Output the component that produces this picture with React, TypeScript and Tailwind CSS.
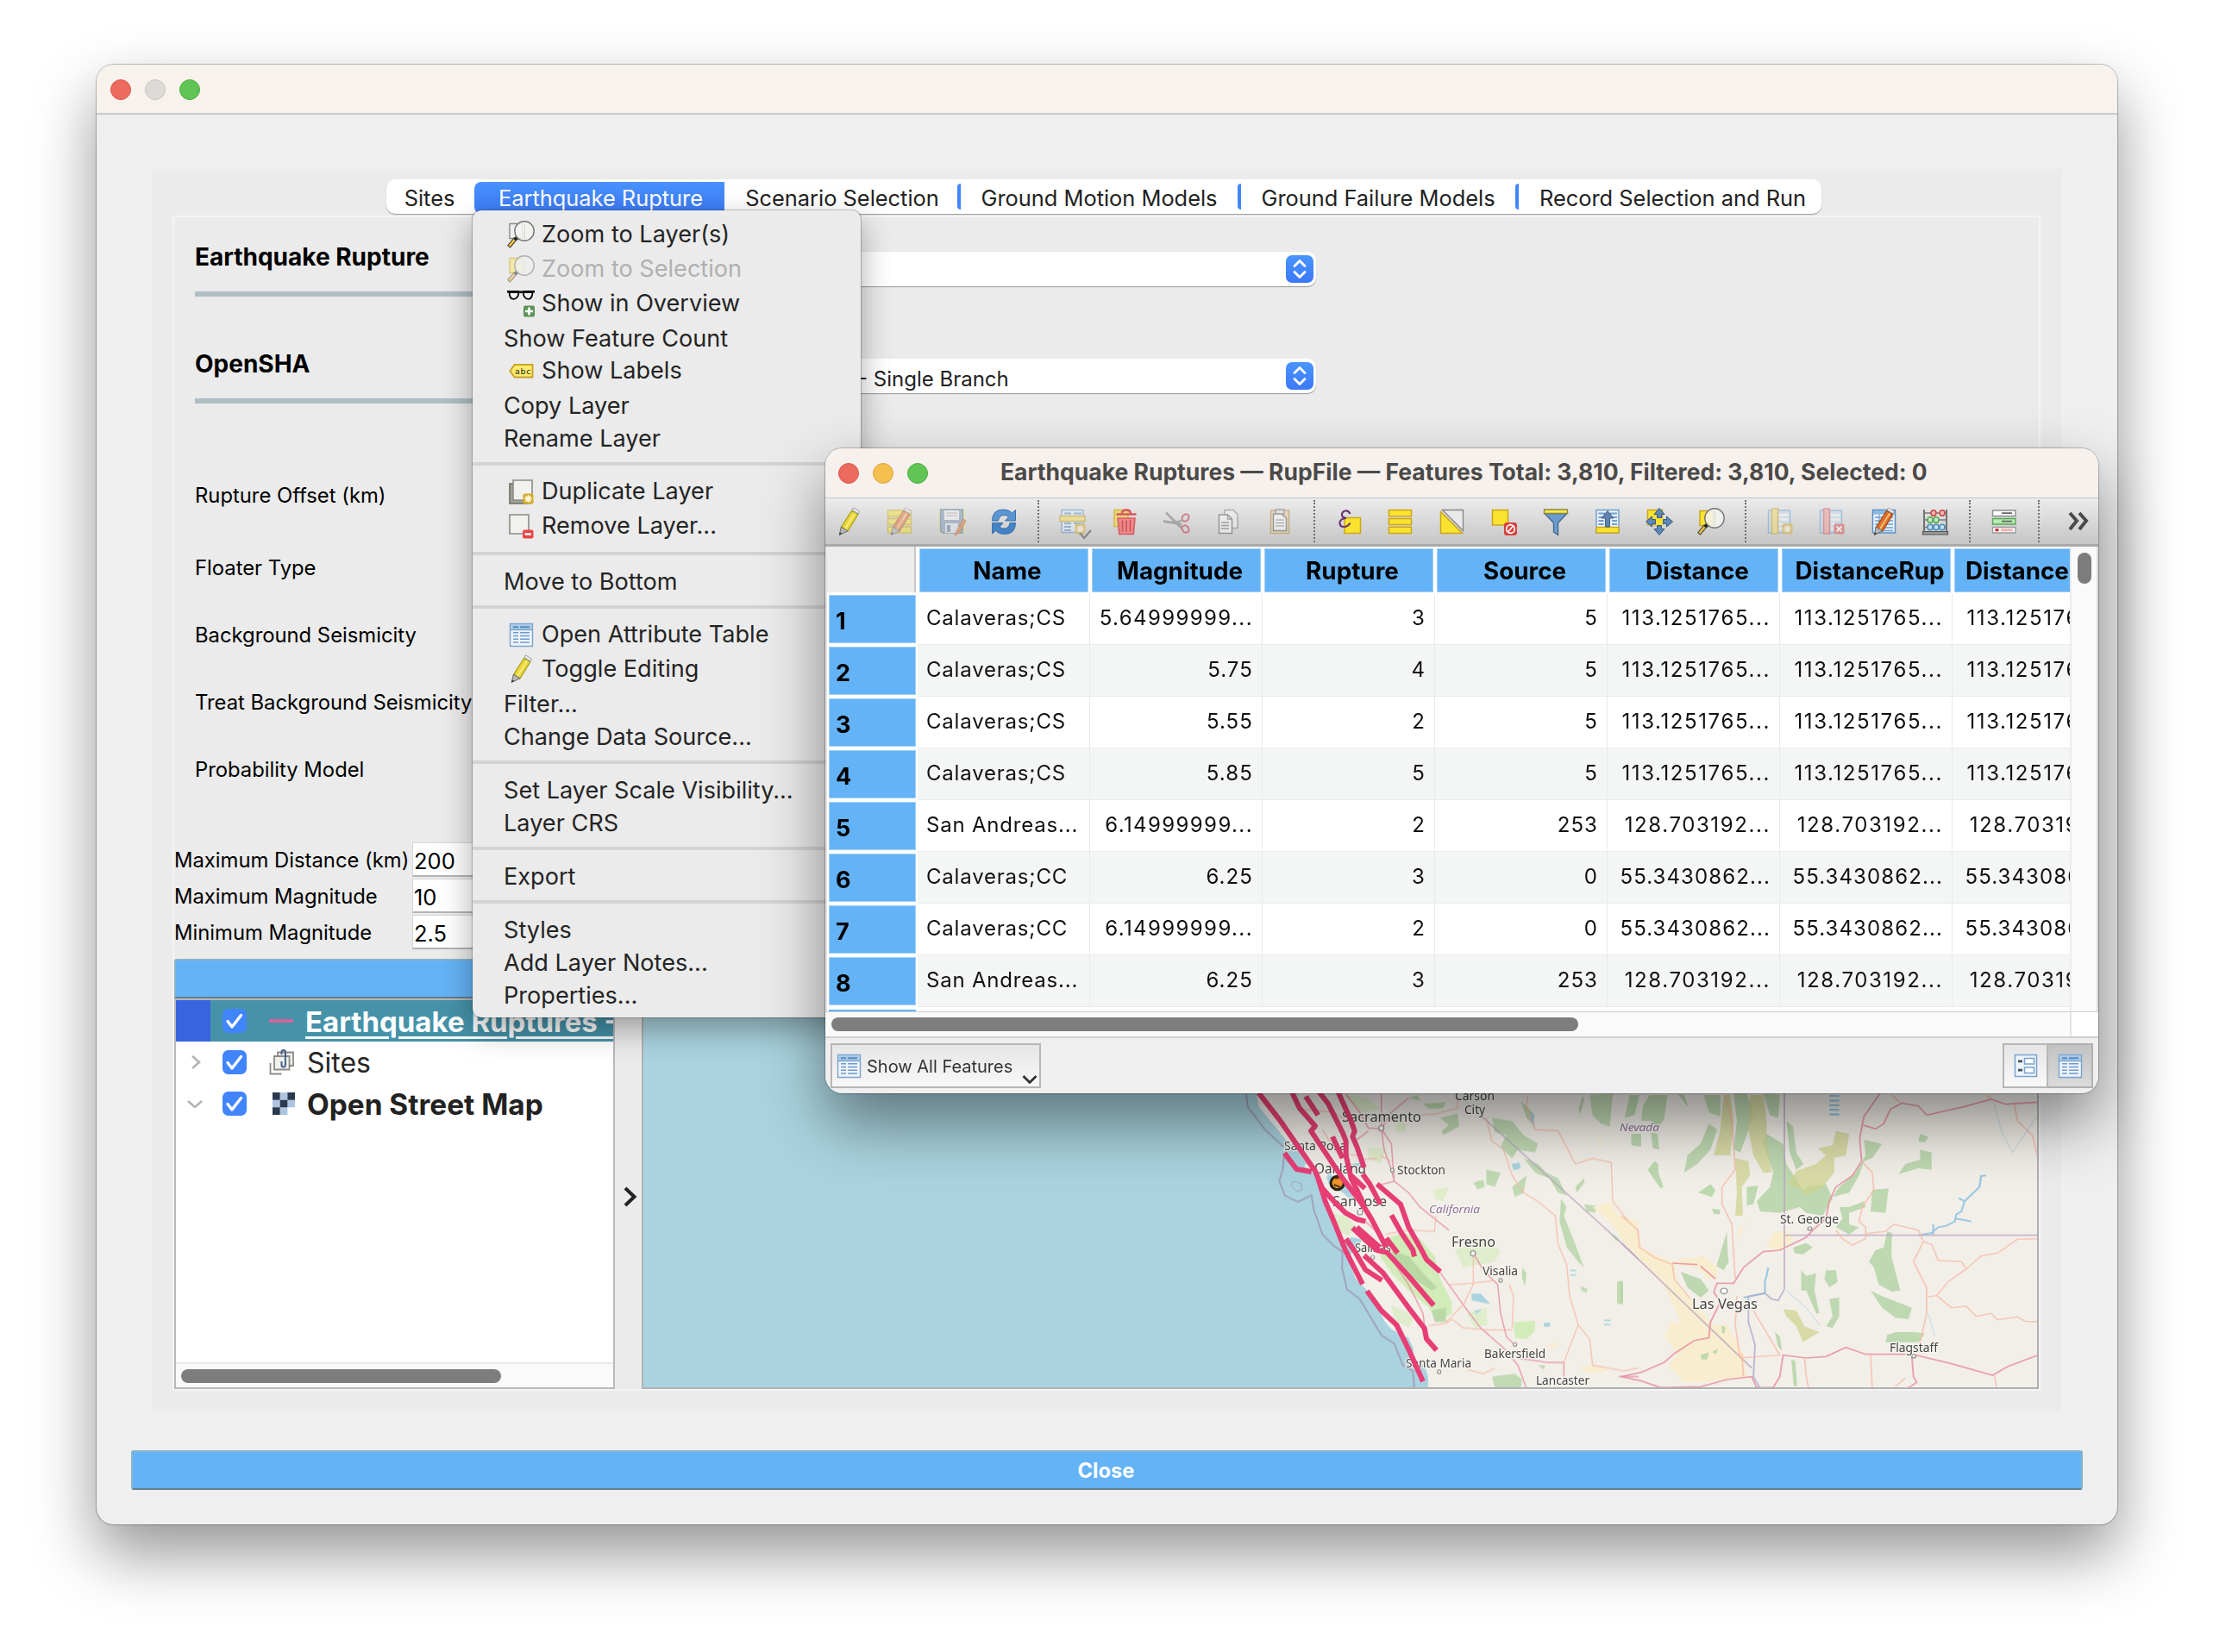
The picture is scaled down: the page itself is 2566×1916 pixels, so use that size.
import React from "react";

/* ---------- icons ---------- */

type SvgProps = { children: React.ReactNode; faded?: boolean; size?: string };

function Icon({ children, faded, size = "size-8" }: SvgProps) {
  return (
    <svg viewBox="0 0 32 32" className={`${size} shrink-0 overflow-visible ${faded ? "opacity-50" : ""}`} fill="none">
      {children}
    </svg>
  );
}

function Magnifier({ page = "#f0f0f0", edge = "#8a8a8a" }: { page?: string; edge?: string }) {
  return (
    <>
      <path d="M3 3.5h15v17H3z" fill={page} stroke={edge} strokeWidth="1.4" />
      <path d="M10 20.5 1.8 30.2" stroke="#3a3a3a" strokeWidth="4.6" />
      <path d="M8.6 22.2 2.4 29.5" stroke="#f5c33c" strokeWidth="2.6" />
      <circle cx="10.8" cy="20.4" r="2.2" fill="#222" />
      <circle cx="20" cy="12" r="11.2" fill="#f3f3ef" fillOpacity=".88" stroke="#777" strokeWidth="1.4" />
      <path d="M20.5 4v17" stroke="#d8d8d0" strokeWidth="1" />
    </>
  );
}

function Pencil({ body = "#e9d83a", dark = "#a89a1c" }: { body?: string; dark?: string }) {
  return (
    <>
      <path d="M19.5 3.5 26.8 7.8 15 27 7.5 22.3z" fill={body} stroke={dark} strokeWidth="1.2" />
      <path d="M23.5 5.8 11.5 25" stroke="#fff6a8" strokeWidth="1.6" strokeOpacity=".7" />
      <path d="M20 2.2 21.6 0 28.6 4.2 27.2 6.8z" fill="#f3f3f3" stroke="#999" strokeWidth="1" />
      <path d="M7.4 22.2 15 26.8 5.2 31.4z" fill="#b9b9b9" stroke="#666" strokeWidth="1" />
      <path d="M6 28.5 8.4 30 5.2 31.4z" fill="#333" />
    </>
  );
}

function TableGlyph() {
  return (
    <>
      <path d="M3.5 3.5h26v26h-26z" fill="#eef4fa" stroke="#7ba3cf" strokeWidth="1.4" />
      <path d="M4 4h25v6.5H4z" fill="#a9cbe8" />
      <path d="M3.5 10.5h26" stroke="#7ba3cf" strokeWidth="1.4" />
      <path d="M7 7.2h6M15 7.2h11" stroke="#5b89bf" strokeWidth="2" />
      <path d="M7 13.8h6M15 13.8h11M7 17.5h6M15 17.5h11M7 21.2h6M15 21.2h11M7 25h6M15 25h11" stroke="#6f9bcd" strokeWidth="1.4" />
    </>
  );
}

function StarBadge() {
  return (
    <>
      <rect x="18.5" y="18.5" width="12" height="12" rx="2" fill="#d3ab2b" />
      <path d="M24.5 20v9M20 24.5h9M21.4 21.4l6.2 6.2M27.6 21.4l-6.2 6.2" stroke="#fff8dd" strokeWidth="1.5" />
    </>
  );
}

const icons = {
  zoomLayer: <Icon><Magnifier /></Icon>,
  zoomSelection: <Icon faded><Magnifier page="#ffe75a" edge="#c8a92c" /></Icon>,
  overview: (
    <Icon>
      <path d="M0 2.200h12.500q3.500 1.200 7 0H32" stroke="#000" strokeWidth="2.400" />
      <path d="M2.500 3q.3 7.800 5 7.800 5.200 0 6-7.800zM18.500 3q.8 7.800 6 7.800 4.700 0 5-7.800z" fill="#f3f3f3" stroke="#000" strokeWidth="1.800" />
      <rect x="19" y="18.500" width="13" height="13" rx="2" fill="#5b9357" />
      <path d="M25.500 20.500v9M21 25h9" stroke="#fff" strokeWidth="2.600" />
    </Icon>
  ),
  labels: (
    <Icon>
      <path d="M8.500 9H29.500v14.500H8.500L3.500 16.200z" fill="#fdec6c" stroke="#c9a227" strokeWidth="1.900" />
      <text x="9" y="20" className="font-['DejaVu_Sans'] text-[9.500px]" textLength="18.500" fill="#222">abc</text>
    </Icon>
  ),
  duplicate: (
    <Icon>
      <path d="M3 7h22v23H3z" fill="#a2a293" stroke="#6d6d64" strokeWidth="1.600" />
      <path d="M7 3h22v23H7z" fill="#f1f1ee" stroke="#8c8c85" strokeWidth="1.600" />
      <StarBadge />
    </Icon>
  ),
  remove: (
    <Icon>
      <path d="M3 3h22v22H3z" fill="#f1f1ee" stroke="#8c8c85" strokeWidth="1.600" />
      <rect x="18" y="20.500" width="12.500" height="10" rx="2" fill="#ea4545" />
      <path d="M20.500 25.500h7.500" stroke="#fff" strokeWidth="2.400" />
    </Icon>
  ),
  table: <Icon><TableGlyph /></Icon>,
  pencil: <Icon><Pencil /></Icon>,
};

const toolbarIcons: Record<string, React.ReactNode> = {
  edit: <Icon><Pencil /></Icon>,
  multiEdit: (
    <Icon faded>
      <path d="M1.500 3h27v7h-27zM1.500 12.500h27v7h-27zM1.500 22h27v7h-27z" fill="#f7e23c" stroke="#c7ab1c" strokeWidth="1.400" />
      <Pencil body="#e8763c" dark="#a8481c" />
    </Icon>
  ),
  save: (
    <Icon faded>
      <rect x="1" y="1" width="30" height="29" rx="3" fill="#eef06a" />
      <path d="M2.500 2h26v27h-24l-2-2z" fill="#7e96b2" stroke="#55708f" strokeWidth="1.400" />
      <path d="M7 3h17v11H7z" fill="#f4f4f4" />
      <path d="M9 6h13M9 9h13" stroke="#999" strokeWidth="1" />
      <path d="M8 18h15v11H8z" fill="#dfe5ec" />
      <path d="M10 20h4v8h-4z" fill="#5d7ba0" />
      <path d="m29 13-8 14-2 5 5-3 8-14z" fill="#e8722c" stroke="#a34b16" strokeWidth=".8" />
    </Icon>
  ),
  reload: (
    <Icon>
      <path d="M2.500 15q0-13 13-13 6.500 0 10 4l4-3.500v12.500H17.500l4-4.500q-2.500-2.500-6-2-5 .5-6 6.500z" fill="#5b95d2" stroke="#3a70ad" strokeWidth="1" />
      <path d="M29.500 17.500q0 13-13 13-6.500 0-10-4l-4 3.500V17.500h12.500l-4 4.500q2.500 2.500 6 2 5-.5 6-6.500z" fill="#4683c4" stroke="#3a70ad" strokeWidth="1" />
    </Icon>
  ),
  addFeature: (
    <Icon faded>
      <path d="M3 2.500h25v26H3z" fill="#e4eef8" stroke="#5b8fc6" strokeWidth="1.500" />
      <path d="M6 6.500h8M17 6.500h9M6 18h8M17 18h9M6 22h8M6 26h8" stroke="#5b8fc6" strokeWidth="1.800" />
      <path d="M1 9.500h29v6H1z" fill="#f7df5a" stroke="#c39f1d" strokeWidth="1.500" />
      <StarBadge />
      <path d="m24 29 5 6 8-9" stroke="#444" strokeWidth="2.400" />
    </Icon>
  ),
  deleteFeature: (
    <Icon>
      <path d="M4 2.500h16v19H4z" fill="#ead979" stroke="#d3b93e" strokeWidth="1.400" />
      <path d="M8 12h20l-1.800 18.500H9.800z" fill="#ec8a8a" stroke="#d65b60" strokeWidth="1.600" />
      <path d="M13.500 14.500v13M18 14.500v13M22.500 14.500v13" stroke="#cf4f55" strokeWidth="1.600" />
      <path d="M6.500 7.500h23M13 6.500q0-4 5-4t5 4" stroke="#d65b60" strokeWidth="2.600" />
    </Icon>
  ),
  cut: (
    <Icon faded>
      <path d="M1 15.500 22 19M4 5.500l18 18" stroke="#777" strokeWidth="3" />
      <ellipse cx="26.500" cy="11.500" rx="3.600" ry="4.500" transform="rotate(35 26.500 11.500)" stroke="#c22f3c" strokeWidth="2.200" />
      <ellipse cx="26.500" cy="24.500" rx="3.600" ry="4.500" transform="rotate(-35 26.500 24.500)" stroke="#c22f3c" strokeWidth="2.200" />
      <path d="m14 17 10-3" stroke="#777" strokeWidth="2" />
    </Icon>
  ),
  copy: (
    <Icon faded>
      <path d="M12 2.500h10l5 5v16H12z" fill="#f2f2f2" stroke="#777" strokeWidth="1.400" />
      <path d="M5.500 8h10l5 5v16.500h-15z" fill="#fafafa" stroke="#555" strokeWidth="1.500" />
      <path d="M15.500 8v5h5M8 17h9M8 20.500h9M8 24h9" stroke="#666" strokeWidth="1.300" />
    </Icon>
  ),
  paste: (
    <Icon faded>
      <path d="M5.500 3h21v26.500h-21z" fill="#e8cf9a" stroke="#b48a3d" strokeWidth="1.600" />
      <path d="M8.500 7h9.500l5.500 5v14.500h-15z" fill="#fafafa" stroke="#555" strokeWidth="1.400" />
      <path d="M11 2h10v5H11z" fill="#ddd" stroke="#666" strokeWidth="1.300" />
      <path d="M11 14h10M11 17.500h10M11 21h10" stroke="#666" strokeWidth="1.200" />
    </Icon>
  ),
  expression: (
    <Icon>
      <path d="M11 11.500h18.500V29.500H11z" fill="#f9e32f" stroke="#cba61c" strokeWidth="1.500" />
      <path d="M17.500 7q-2-4.500-6-3.500-4 1.500-3.500 5 .5 3 5 3.500-7.500.5-7.500 5.500 0 4.500 4.500 4.500 5 0 7.500-4.500" stroke="#6a3570" strokeWidth="2.200" />
    </Icon>
  ),
  selectAll: (
    <Icon>
      <path d="M2.500 2.500h26v7.200h-26zM2.500 12.400h26v7.200h-26zM2.500 22.200h26v7.200h-26z" fill="#f9e32f" stroke="#cba61c" strokeWidth="1.500" />
    </Icon>
  ),
  invert: (
    <Icon>
      <path d="M4.500 2.500h24v24z" fill="#e9e9e9" stroke="#888" strokeWidth="1.400" />
      <path d="M2.500 4.500v25h25z" fill="#f9e32f" stroke="#cba61c" strokeWidth="1.500" />
    </Icon>
  ),
  deselect: (
    <Icon>
      <path d="M2.500 2.500h18v17.500h-18z" fill="#f9e32f" stroke="#cba61c" strokeWidth="1.500" />
      <rect x="16" y="17" width="15" height="15" rx="3" fill="#d8403f" />
      <circle cx="23.500" cy="24.500" r="4.800" stroke="#fff" strokeWidth="1.700" />
      <path d="m20.500 28 6-7" stroke="#fff" strokeWidth="1.700" />
    </Icon>
  ),
  filter: (
    <Icon>
      <path d="M3 6.500 13.500 17.500V28l5 3.500V17.500L29 6.500z" fill="#6b9bd1" stroke="#46688f" strokeWidth="1.400" />
      <path d="M2.500 2h27v4.500h-27z" fill="#f9e84a" stroke="#8c8741" strokeWidth="1.300" />
    </Icon>
  ),
  moveTop: (
    <Icon>
      <path d="M3 2.500h26v26.500H3z" fill="#eaf2fa" stroke="#6f9fd0" strokeWidth="1.500" />
      <path d="M5.500 6.500h8M19 6.500h8M5.500 11h6M21 11h6M5.500 15h6M21 15h6M5.500 19h6M21 19h6" stroke="#6f9fd0" strokeWidth="1.900" />
      <path d="M3 22.500h26V29H3z" fill="#f9e32f" stroke="#cba61c" strokeWidth="1.500" />
      <path d="M16 3.500 23 12h-4.500v10h-5V12H9z" fill="#5f83ad" stroke="#3f5f86" strokeWidth="1" />
    </Icon>
  ),
  pan: (
    <Icon>
      <path d="M2.500 2.500h17v17h-17z" fill="#f9e32f" stroke="#cba61c" strokeWidth="1.500" />
      <path d="m16 .5 6 7h-3.500v4h-5v-4H10zM16 31.500l6-7h-3.500v-4h-5v4H10zM.5 16l7-6v3.500h4v5h-4V22zM31.500 16l-7-6v3.500h-4v5h4V22z" fill="#5d88b8" stroke="#38587e" strokeWidth="1" />
      <path d="M12 12h8v8h-8z" fill="#f9e32f" />
    </Icon>
  ),
  zoomTo: <Icon><Magnifier page="#f9e32f" edge="#cba61c" /></Icon>,
  newField: (
    <Icon faded>
      <path d="M2.500 3h25v26h-25z" fill="#c4dbf1" stroke="#6f9fd0" strokeWidth="1.500" />
      <path d="M15 8.500h11M15 13.500h11M15 18.500h4M15 24h3" stroke="#f4f8fc" strokeWidth="3" />
      <path d="M6.500 1h7v29h-7z" fill="#f2dc6b" stroke="#c6a22a" strokeWidth="1.500" />
      <StarBadge />
    </Icon>
  ),
  deleteField: (
    <Icon faded>
      <path d="M2.500 3h25v26h-25z" fill="#c4dbf1" stroke="#6f9fd0" strokeWidth="1.500" />
      <path d="M15 8.500h11M15 13.500h11M15 18.500h4M15 24h3" stroke="#f4f8fc" strokeWidth="3" />
      <path d="M6.500 1h7v29h-7z" fill="#f09a9a" stroke="#d05a5a" strokeWidth="1.500" />
      <rect x="18.500" y="18.500" width="12" height="12" rx="2" fill="#dd4d4d" />
      <path d="m21.500 21.500 6 6M27.500 21.500l-6 6" stroke="#fff" strokeWidth="2" />
    </Icon>
  ),
  editField: (
    <Icon>
      <path d="M3.500 2.500h26V29h-26z" fill="#eaf2fa" stroke="#5b8fc6" strokeWidth="1.500" />
      <path d="M4 3h25v4.500H4z" fill="#8cb8e3" />
      <path d="M6 11h21M6 15h21M6 19h21M6 23h21M6 26.500h21" stroke="#6f9fd0" strokeWidth="1.500" />
      <path d="M11 7.500v21" stroke="#6f9fd0" strokeWidth="1.200" />
      <Pencil body="#e0702a" dark="#9a4613" />
    </Icon>
  ),
  abacus: (
    <Icon>
      <path d="M3 2v25M29 2v25" stroke="#666" strokeWidth="1.800" />
      <path d="M3 6h26M3 14h26M3 22.500h26" stroke="#777" strokeWidth="1.400" />
      <path d="M1.500 27.500h29v3.500h-29z" fill="#999" stroke="#555" strokeWidth="1.200" />
      <g strokeWidth="1.500">
        <ellipse cx="14" cy="6" rx="3" ry="3.200" fill="#f4b3b3" stroke="#c94545" />
        <ellipse cx="24" cy="6" rx="3" ry="3.200" fill="#f4b3b3" stroke="#c94545" />
        <ellipse cx="10" cy="14" rx="3" ry="3.200" fill="#c5efc2" stroke="#58a656" />
        <ellipse cx="17" cy="14" rx="3" ry="3.200" fill="#c5efc2" stroke="#58a656" />
        <ellipse cx="10" cy="22.500" rx="3" ry="3.200" fill="#c3e2f4" stroke="#4a8bb5" />
        <ellipse cx="17" cy="22.500" rx="3" ry="3.200" fill="#c3e2f4" stroke="#4a8bb5" />
        <ellipse cx="24" cy="22.500" rx="3" ry="3.200" fill="#c3e2f4" stroke="#4a8bb5" />
      </g>
    </Icon>
  ),
  conditional: (
    <Icon>
      <path d="M2.500 3h26.500v6.500H2.500z" fill="#fff" stroke="#8d8d8d" strokeWidth="1.400" />
      <path d="M2.500 12.500h26.500V19H2.500z" fill="#b6ecb0" stroke="#5aa557" strokeWidth="1.400" />
      <path d="M2.500 22.500h26.500V29H2.500z" fill="#fff" stroke="#999" strokeWidth="1.400" />
      <path d="M13 6.200h12M13 15.700h12" stroke="#666" strokeWidth="1.800" />
      <path d="M5.500 25.700h4" stroke="#c22" strokeWidth="3" />
      <path d="M12 25.700h14" stroke="#f5b3b3" strokeWidth="3" />
    </Icon>
  ),
};

/* ---------- small controls ---------- */

function TrafficLights({ middle }: { middle: string }) {
  return (
    <div className="flex gap-4">
      <span className="size-6 rounded-full border border-[#d9584c] bg-[#ec6a5e]" />
      <span className={`size-6 rounded-full border ${middle}`} />
      <span className="size-6 rounded-full border border-[#4fae41] bg-[#60c554]" />
    </div>
  );
}

function Combo({ text }: { text?: string }) {
  return (
    <div className="flex h-10 w-[766px] items-center justify-between rounded-[10px] bg-white pr-[3px] pl-[235px] shadow-[0_1px_1px_rgba(0,0,0,0.35)]">
      <span className="pt-[7px] text-[24px] text-[#222]">{text}</span>
      <svg viewBox="0 0 32 32" className="size-8" fill="none">
        <defs>
          <linearGradient id="stepper" x1="0" y1="0" x2="0" y2="1">
            <stop offset="0" stopColor="#4b95ff" />
            <stop offset="1" stopColor="#3b78f6" />
          </linearGradient>
        </defs>
        <rect width="32" height="32" rx="7" fill="url(#stepper)" />
        <path d="m10 12.500 6-6 6 6M10 19.500l6 6 6-6" stroke="#fff" strokeWidth="2.800" strokeLinecap="round" strokeLinejoin="round" />
      </svg>
    </div>
  );
}

function Checkbox() {
  return (
    <svg viewBox="0 0 28 28" className="size-7 shrink-0" fill="none">
      <rect width="28" height="28" rx="6.500" fill="#4185fc" />
      <path d="m6 14.500 5 6.500L21.500 7.500" stroke="#fff" strokeWidth="3.400" strokeLinecap="round" strokeLinejoin="round" />
    </svg>
  );
}

/* ---------- context menu ---------- */

type Item = { label: string; icon?: React.ReactNode; disabled?: boolean };

const menuGroups: Item[][] = [
  [
    { label: "Zoom to Layer(s)", icon: icons.zoomLayer },
    { label: "Zoom to Selection", icon: icons.zoomSelection, disabled: true },
    { label: "Show in Overview", icon: icons.overview },
    { label: "Show Feature Count" },
    { label: "Show Labels", icon: icons.labels },
    { label: "Copy Layer" },
    { label: "Rename Layer" },
  ],
  [
    { label: "Duplicate Layer", icon: icons.duplicate },
    { label: "Remove Layer...", icon: icons.remove },
  ],
  [{ label: "Move to Bottom" }],
  [
    { label: "Open Attribute Table", icon: icons.table },
    { label: "Toggle Editing", icon: icons.pencil },
    { label: "Filter..." },
    { label: "Change Data Source..." },
  ],
  [{ label: "Set Layer Scale Visibility..." }, { label: "Layer CRS" }],
  [{ label: "Export" }],
  [{ label: "Styles" }, { label: "Add Layer Notes..." }, { label: "Properties..." }],
];

function ContextMenu() {
  return (
    <div className="absolute top-[244px] left-[548px] w-[450px] rounded-[10px] bg-[#ebebeb] py-2 text-[27.100px] text-[#242424] shadow-[0_0_1px_1px_rgba(0,0,0,0.22),0_14px_36px_rgba(0,0,0,0.34)]">
      {menuGroups.map((group, g) => (
        <div key={g}>
          {g > 0 && <div className="my-2.5 h-1 bg-[#d3d3d3]" />}
          {group.map((item) =>
            item.icon ? (
              <div key={item.label} className={`flex h-10 items-center gap-2 pl-10 ${item.disabled ? "text-[#b0b0b0]" : ""}`}>
                {item.icon}
                <span>{item.label}</span>
              </div>
            ) : (
              <div key={item.label} className="flex h-[38px] items-center pt-[3px] pl-9">
                {item.label}
              </div>
            ),
          )}
        </div>
      ))}
    </div>
  );
}

/* ---------- attribute table window ---------- */

const toolGroups = [
  ["edit", "multiEdit", "save", "reload"],
  ["addFeature", "deleteFeature", "cut", "copy", "paste"],
  ["expression", "selectAll", "invert", "deselect", "filter", "moveTop", "pan", "zoomTo"],
  ["newField", "deleteField", "editField", "abacus"],
  ["conditional"],
];

const headers = ["Name", "Magnitude", "Rupture", "Source", "Distance", "DistanceRup", "Distance"];

const rows = [
  ["Calaveras;CS", "5.64999999...", "3", "5", "113.1251765..."],
  ["Calaveras;CS", "5.75", "4", "5", "113.1251765..."],
  ["Calaveras;CS", "5.55", "2", "5", "113.1251765..."],
  ["Calaveras;CS", "5.85", "5", "5", "113.1251765..."],
  ["San Andreas...", "6.14999999...", "2", "253", "128.703192..."],
  ["Calaveras;CC", "6.25", "3", "0", "55.3430862..."],
  ["Calaveras;CC", "6.14999999...", "2", "0", "55.3430862..."],
  ["San Andreas...", "6.25", "3", "253", "128.703192..."],
];

function numberTracking(v: string) {
  if (v.startsWith("1")) return "tracking-[1.6px]";
  if (v.endsWith("9...")) return "tracking-[1.4px]";
  return "tracking-[1.1px]";
}

function AttributeTable() {
  return (
    <div className="absolute top-[520px] left-[957px] flex h-[748px] w-[1476px] flex-col overflow-hidden rounded-[20px] bg-[#efefef]">
      <div className="flex h-[57px] shrink-0 items-center bg-[#f7f1ed] pl-[15px]">
        <TrafficLights middle="border-[#d9a53b] bg-[#f4bf4f]" />
        <div className="ml-[84px] pb-0.5 text-[26.5px] font-bold whitespace-nowrap text-[#4b4a49]">
          Earthquake Ruptures — RupFile — Features Total: 3,810, Filtered: 3,810, Selected: 0
        </div>
      </div>
      <div className="flex h-[57px] shrink-0 items-center border-t border-b-[3px] border-t-[#c4c4c4] border-b-[#a9a9a9] bg-linear-to-b from-[#ececec] to-[#c6c6c6]">
        <div className="-ml-[3px] flex h-full shrink-0 items-center">
          {toolGroups.map((group, g) => (
            <React.Fragment key={g}>
              {group.map((name) => (
                <div key={name} className="flex w-[60px] shrink-0 justify-center">
                  {toolbarIcons[name]}
                </div>
              ))}
              <div className="flex h-full w-5 shrink-0 justify-center py-0.5">
                <div className="border-l-2 border-dotted border-[#6e6e6e]" />
              </div>
            </React.Fragment>
          ))}
        </div>
        <svg viewBox="0 0 28 28" className="ml-6 size-7" fill="none" stroke="#4a4a4a" strokeWidth="4">
          <path d="m2 4 8 9-8 10M13 4l8 9-8 10" />
        </svg>
      </div>
      <div className="flex h-[539px] shrink-0 bg-white">
        <div className="flex w-[1443px] flex-col overflow-hidden border-l-2 border-[#e2e2e2]">
          <div className="flex h-[54px] shrink-0 gap-1 pt-0.5 pb-px">
            <div className="-mt-0.5 w-[103px] shrink-0 border-r-2 border-[#c9c9c9] bg-[#ececec]" />
            {headers.map((h, i) => (
              <div
                key={i}
                className={`flex w-[196px] shrink-0 items-center border border-[#a3d0f6] bg-[#64b3f6] pt-0.5 text-[27.800px] font-bold text-black ${i === 6 ? "justify-start pl-3" : "justify-center pl-2"}`}
              >
                {h}
              </div>
            ))}
          </div>
          {rows.map((r, i) => (
            <div key={i} className="flex h-[60px] shrink-0">
              <div className="w-[105px] shrink-0 py-0.5 pr-0.5 pl-0.5">
                <div className="flex h-full items-center border border-[#a3d0f6] bg-[#64b3f6] pt-1 pl-[7px] text-[27px] font-bold text-black">{i + 1}</div>
              </div>
              <div className={`flex border-b text-[24px] text-[#111] ${i % 2 ? "border-[#e9eaea] bg-[#f4f5f5]" : "border-[#ececec] bg-white"}`}>
                <div className="flex w-[200px] items-center border-r border-[#e9eaea] pb-0.5 pl-2.5 tracking-[0.8px] whitespace-nowrap">{r[0]}</div>
                {[r[1], r[2], r[3], r[4], r[4], r[4]].map((v, j) => (
                  <div key={j} className={`flex w-[200px] items-center justify-end border-r border-[#e9eaea] pr-[10px] pb-0.5 ${numberTracking(v)}`}>
                    {v}
                  </div>
                ))}
              </div>
            </div>
          ))}
          <div className="h-[5px] pt-[3px] pl-0.5">
            <div className="h-0.5 w-[101px] bg-[#64b3f6]" />
          </div>
        </div>
        <div className="flex flex-1 justify-center border-x-2 border-l-[#ececec] border-r-[#dcdcdc] bg-[#fafafa] pt-[7px]">
          <div className="h-9 w-4 rounded-full bg-[#7d7d7d]" />
        </div>
      </div>
      <div className="flex h-[31px] shrink-0 border-t border-b-2 border-[#d0d0d0] bg-[#fafafa]">
        <div className="flex w-[1443px] items-center pl-[7px]">
          <div className="h-4 w-[866px] rounded-full bg-[#7d7d7d]" />
        </div>
        <div className="flex-1 border-l-2 border-[#e4e4e4] bg-white" />
      </div>
      <div className="flex flex-1 items-center justify-between pr-1.5 pl-1.5 pb-px">
        <div className="flex h-[52px] w-[244px] items-center border-2 border-[#b6b6b6] bg-linear-to-b from-[#e6e6e6] to-[#f8f8f8] pl-[3px]">
          <Icon size="size-8"><TableGlyph /></Icon>
          <span className="ml-[5px] pt-[3px] text-[20px] whitespace-nowrap text-[#333]">Show All Features</span>
          <svg viewBox="0 0 18 10" className="mt-8 ml-[11px] h-2.5 w-[18px]" fill="none" stroke="#333" strokeWidth="2.800">
            <path d="m1.500 1 7.500 7.500L16.500 1" />
          </svg>
        </div>
        <div className="flex h-[52px]">
          <div className="flex w-[53px] items-center justify-center border-2 border-[#b6b6b6] bg-linear-to-b from-[#e6e6e6] to-[#f8f8f8] pt-px">
            <Icon>
              <path d="M3.500 3.500h25v25h-25z" fill="#eef4fa" stroke="#7ba3cf" strokeWidth="1.500" />
              <path d="M14.500 7.500h11v6.500h-11zM14.500 18h11v6.500h-11z" fill="#fff" stroke="#7ba3cf" strokeWidth="1.500" />
              <path d="M7 10.800h5M7 21.200h5" stroke="#3f5266" strokeWidth="2.800" />
            </Icon>
          </div>
          <div className="flex w-[52px] items-center justify-center border-2 border-l-0 border-[#b0b0b0] bg-linear-to-b from-[#c2c2c2] to-[#dadada]">
            {icons.table}
          </div>
        </div>
      </div>
    </div>
  );
}

/* ---------- map ---------- */

const faults = [
  "M178 52 250 145 375 325 400 385 440 430 480 470 520 492 550 500",
  "M268 262 310 318 362 327",
  "M385 350 410 430 440 500 480 600 505 650 540 718",
  "M295 52 320 105 375 168 360 185 410 260 470 350 520 415 545 450 570 490 622 590",
  "M342 65 385 130",
  "M385 45 420 90 470 190 482 220 482 270 500 350 535 420 545 450",
  "M455 50 500 150 512 185 505 205 520 240 545 312",
  "M435 205 470 280",
  "M500 340 548 385",
  "M540 335 565 370 602 440",
  "M590 370 672 440 700 520 740 590 762 632 810 675",
  "M640 478 675 540 715 600 720 622",
  "M505 522 545 560 590 600 625 608 700 690 787 792",
  "M520 520 600 590",
  "M622 558 662 610",
  "M482 560 510 600 550 668 607 705",
  "M545 618 612 680 700 800 755 872 762 908 797 948",
  "M555 742 605 810 658 860 700 945 750 1057",
];

type Place = [string, number, number, number, number];
const places: Place[] = [
  ["Sacramento", 1556, 1301, 92, 16],
  ["Carson", 1687, 1276, 46, 14],
  ["City", 1698, 1292, 24, 14],
  ["Santa Rosa", 1489, 1334, 72, 14],
  ["Oakland", 1524, 1361, 60, 16],
  ["Stockton", 1620, 1362, 56, 14],
  ["San Jose", 1545, 1399, 63, 16],
  ["Salinas", 1571, 1452, 42, 14],
  ["Fresno", 1683, 1446, 51, 16],
  ["Visalia", 1719, 1479, 41, 14],
  ["Bakersfield", 1721, 1575, 71, 14],
  ["Santa Maria", 1630, 1586, 76, 14],
  ["Lancaster", 1781, 1606, 62, 14],
  ["St. George", 2064, 1419, 68, 14],
  ["Las Vegas", 1962, 1518, 76, 16],
  ["Flagstaff", 2191, 1568, 56, 14],
];

function MapCanvas() {
  return (
    <svg viewBox="746 1114 1616 495" className="block h-full w-full" fill="none" preserveAspectRatio="xMinYMin slice">
      <path d="M746 1114h1620v500H746z" fill="#f2efe9" />
      <g transform="translate(1400 1250) scale(.33333)">
        <path
          d="M-2000-420H60L120-60 170 55 178 100 232 165 272 215 300 240 320 262 326 300 362 326 388 352 396 400 420 440 438 480 448 522 468 568 500 555 536 562 530 590 500 612 492 640 516 700 560 745 590 790 615 845 640 875 700 905 716 940 718 975 756 1005 768 1040 768 1100H-2000z"
          fill="#aad3df"
        />
        <path d="M420 330 440 345 480 375 510 420 500 425 465 395 430 385 415 350zM440 310 500 300 540 295 535 305 480 318z" fill="#aad3df" />
        <path d="M290 250 325 270 345 300 330 310 300 285z" fill="#aad3df" />
        <g fill="#cdebb0" opacity=".85">
          <path d="M620 560 680 540 740 560 790 620 810 700 850 780 850 820 800 850 770 800 700 740 640 680 600 620z" />
          <path d="M1065 850 1140 845 1140 880 1110 910 1070 905z" />
          <path d="M420 470 480 480 520 520 490 550 450 530zM900 820 970 800 975 860 930 870zM860 600 960 560 1020 600 1000 640 890 660zM640 790 720 830 700 870 650 840z" opacity=".6" />
          <path d="M785 390 840 380 820 430 790 420zM480 60 560 70 600 110 540 120zM560 240 620 250 600 300 560 280zM660 140 690 160 690 190 655 190z" opacity=".6" />
        </g>
        <g fill="#add19e" opacity=".72">
          <path d="M810 140 870 125 875 170 820 200 815 185 840 165zM750 90 830 85 820 105 770 108zM700 70 730 60 740 80z" />
          <path d="M640 600 700 620 760 690 800 730 780 740 720 700 660 650zM780 810 830 800 830 850 790 850z" />
          <path d="M990 140 1060 150 1100 200 1150 230 1140 260 1080 250 1060 280 1020 240 1040 200 1000 190zM1090 80 1130 120 1140 170 1110 140zM1100 280 1150 300 1180 330 1220 350 1250 410 1220 400 1190 350 1140 330z" />
          <path d="M1230 420 1250 450 1240 480 1280 580 1310 660 1290 640 1250 590 1225 500zM1060 380 1110 340 1100 400 1070 415zM970 320 1020 330 1000 380 970 370zM925 365 960 355 965 380 940 388z" />
          <path d="M1330 60 1410 55 1400 170 1370 160 1340 130zM1290 110 1305 65 1312 70 1298 125zM1280 380 1310 350 1312 365 1285 400zM1310 440 1350 445 1350 470 1320 465zM1425 710 1445 705 1445 790 1425 785zM1300 725 1322 735 1318 748 1300 740z" />
          <path d="M990 1040 1070 1030 1095 1050 1090 1080 1000 1080zM1150 1000 1175 1000 1170 1015zM1095 660 1110 680 1105 725 1095 700zM1400 540 1420 550 1440 570 1420 565z" />
        </g>
        <g fill="#f9edcf">
          <path d="M1340 450 1400 430 1430 480 1500 500 1500 620 1450 570 1400 500zM1355 210 1378 215 1365 235zM1290 1010 1350 1000 1400 1020 1330 1030zM1180 930 1230 920 1200 940z" />
        </g>
        <g fill="#aad3df">
          <path d="M1058 300 1085 295 1090 315 1065 322zM1122 120 1138 125 1136 160 1124 155zM918 752 950 750 985 788 920 775zM930 810 955 805 935 822zM1170 852h22v14h-22zM1380 842h22v5h-22zM1380 856h22v5h-22zM1262 668h20v5h-20zM1262 684h20v5h-20z" />
        </g>
        <g stroke="#9d8fae" strokeWidth="6" opacity=".7">
          <path d="M135 55 140 100 200 180 265 240M268 262 262 320 250 360 270 410 315 432 362 408 370 460 385 500 400 545 440 585 470 605 468 660 485 735 530 770 560 820 605 895 650 925 680 1000 715 1020 720 1080" />
          <path d="M300 360 290 375 310 395 330 390 325 368z" strokeWidth="3" />
        </g>
        <path d="M950 130 1500 630" stroke="#b9a5bd" strokeWidth="5" opacity=".8" />
        <g stroke="#e892a2" strokeWidth="4.500" opacity=".85">
          <path d="M480 55 530 120 560 175 605 178 640 230 650 360 700 400 740 450 840 530M605 55 605 178M605 178 640 120 700 70M605 178 615 250 640 320 650 360 590 375" />
          <path d="M790 650 840 720 890 790 950 870 1030 940 1080 1000 1110 1080M925 610 960 670 1010 720 1020 820 1040 900 1070 930M1080 975 1180 990 1240 990 1240 1040M1430 1040 1500 1040" />
          <path d="M620 600 700 720 750 820 755 860M560 185 520 215M550 500 610 555" />
        </g>
        <g stroke="#f7b9a4" strokeWidth="4.500" opacity=".75">
          <path d="M740 130 800 125 870 105 870 60M620 545 700 530 790 535 795 480M770 862 830 855 850 840 890 870 980 878 1060 878M1115 60 1110 100 1140 180 1220 185 1280 300 1340 280 1405 295 1410 430 1480 520 1500 540" />
          <path d="M970 140 990 220 1030 250 1060 340 1100 400 1150 430 1210 480 1220 580 1250 650 1260 760 1290 860 1240 990M1290 860 1330 910 1340 1000 1450 1020 1500 1010M840 720 920 715 1000 705M925 610 925 720 890 790 830 850M1050 720 1065 760 1060 870M905 1015 960 1030 1000 1010M540 285 590 280" />
          <path d="M340 110 440 120 500 160M400 180 450 260 520 270M600 270 640 290" />
        </g>
        <g stroke="#8b8b8b" strokeWidth="3.500" fill="#fff">
          <circle cx="605" cy="175" r="9" /><circle cx="531" cy="468" r="9" /><circle cx="924" cy="611" r="9" />
          <circle cx="1020" cy="705" r="6" /><circle cx="1070" cy="928" r="6" /><circle cx="806" cy="1023" r="6" />
          <circle cx="643" cy="321" r="6" /><circle cx="575" cy="625" r="6" />
        </g>
      </g>
      <g transform="translate(1880 1250) scale(.3827 .33333)">
        <g fill="#f9edcf">
          <path d="M0 480 45 520 60 590 150 640 250 620 290 660 290 700 260 700 230 660 160 650 170 720 280 860 320 860 370 960 380 1040 250 1060 190 1060 140 1000 170 960 130 900 150 850 180 850 120 700 60 640 0 560zM460 540 500 530 520 560 490 600 440 590zM400 480 370 520 350 580 355 530z" />
        </g>
        <g fill="#add19e" opacity=".75">
          <path d="M25 60 55 60 40 130 10 140zM85 60 140 60 130 140 110 180 90 150 60 150 65 100zM30 195 60 195 60 240 30 235zM90 190 110 195 115 250 95 245zM170 55 190 60 205 105 190 85z" />
          <path d="M250 60 300 60 300 135 265 120zM265 160 290 180 270 250 230 300 190 330 200 270 240 230zM100 290 112 300 112 330 128 380 118 385 80 320z" />
          <path d="M340 55 380 55 400 120 380 200 360 260 340 250 350 150zM430 55 480 60 475 140 450 130zM440 195 490 230 500 300 550 390 560 380 620 370 640 420 610 480 560 470 540 450 480 470 420 465 410 430 450 380 460 330 430 230zM500 150 520 170 530 260 552 300 530 320 510 260z" />
          <path d="M735 215 790 230 760 280 735 290 720 340 690 400 640 415 660 380 710 330 740 270zM760 390 810 385 800 470 755 465zM905 195 930 205 920 225 900 222zM905 250 940 260 940 320 900 315 840 335 860 300 905 285zM660 450 690 450 735 430 740 450 690 470 690 510 720 520 690 545 650 520 670 490z" />
          <path d="M232 400 270 370 285 390 275 415zM275 455 300 460 298 475 280 475zM320 535 322 610 325 640 310 670 288 655 300 610zM180 675 240 700 265 740 240 765 200 730zM380 380 415 375 400 440 380 445z" />
          <path d="M805 535 820 540 818 620 845 740 820 745 780 720 765 660 750 640 770 600 795 590zM755 740 790 760 880 800 870 840 830 835 790 800zM620 670 650 670 655 710 630 730 615 700zM630 770 660 765 660 830 640 870 620 865 640 830zM545 670 560 690 590 680 585 740 600 820 590 820 560 740 545 740z" />
          <path d="M520 590 560 575 580 590 550 615 525 610zM830 885 890 885 920 890 900 920 800 920 805 895zM465 885 480 900 487 950 475 935zM515 980 527 985 533 1075 522 1070zM240 965 265 955 260 980 243 980zM275 955 292 942 288 962zM305 860 315 870 312 890 304 885zM0 710 5 710 5 780 0 780z" />
        </g>
        <g fill="#cfd38a" opacity=".7">
          <path d="M310 60 330 60 340 150 330 270 280 270 300 180zM390 60 430 60 440 150 440 230 455 330 430 330 400 270 385 180zM345 280 385 290 390 340 365 380 368 480 345 480 350 400zM650 185 690 195 680 270 645 280 645 330 610 380 560 410 545 390 505 370 530 325 590 300 620 270 595 245 640 235z" />
          <path d="M490 805 530 810 555 865 600 885 550 920 530 865 500 830z" />
        </g>
        <g stroke="#9cc9e2" strokeWidth="6">
          <path d="M1105 340 1090 342 1085 380 1062 405 1040 430 1030 465 1015 475 1010 500 985 515 960 520 940 540 900 548M1040 430 1022 418M1010 490 1040 495 1060 500M945 510 945 545M445 660 440 690 435 705 435 750 370 765" />
          <path d="M645 60v80" strokeWidth="30" strokeDasharray="7 9" />
        </g>
        <path d="M1130 90 1150 180 1185 260 1220 200 1260 130M500 740 560 800 600 860M930 820 950 900" stroke="#d5e2e4" strokeWidth="4" />
        <g stroke="#b9a5bd" strokeWidth="5" opacity=".75">
          <path d="M494 55V735M494 548H1262M0 575 395 1010" />
          <path d="M494 735 475 775 455 770 435 750 385 760 385 850 405 930 400 1040 420 1080" stroke="#a7a9cc" />
        </g>
        <g stroke="#e892a2" strokeWidth="5" opacity=".85">
          <path d="M783 55 735 135 722 210 728 290 700 340 650 380 630 430 620 490 580 530 560 555 480 600 430 605 370 660 340 715 290 715 280 745 300 780 270 850 265 905 220 915 160 960 130 990 60 1025 0 1040 60 1055 120 1078 240 1075 320 1050 395 1040 410 1078 460 1078 480 1040 490 965 560 975 620 970 680 938 740 962 880 962 1000 995 1125 1035 1170 1005 1262 965" />
          <path d="M733 165 770 178 795 160 815 110 850 88 900 98 925 130 1040 100 1120 75 1165 92 1262 85M880 965 885 1040 895 1060 870 1078M240 655 285 700M155 645 230 650" />
        </g>
        <g stroke="#f7b9a4" strokeWidth="4.500" opacity=".75">
          <path d="M315 60 335 150 345 320 305 380 305 440 335 510 345 700M0 480 50 530 55 590 100 625 155 650 160 700 210 770M400 810 480 965 360 975 345 860 350 760M728 290 760 330 765 390 730 450 720 500 740 520 740 560 700 582 670 560 650 530M740 542 800 535 825 510 900 530 915 570 885 640 925 730 925 820 905 920" />
          <path d="M915 570 940 580 960 635 1030 640 1045 665 1090 620 1140 610 1200 562 1262 560M1045 665 990 710 955 758 930 762M955 758 1000 800 1045 795 1075 830 1120 820 1140 842 1200 832 1225 848 1262 848M1190 85 1200 150 1245 200 1260 270M820 60 845 88M1105 60 1125 75M555 975 560 1040 567 1078M755 965 760 1078M1130 1035 1137 1078M830 1075 860 1045M365 960 370 1040" />
        </g>
        <g stroke="#8b8b8b" strokeWidth="3.500" fill="#fff">
          <circle cx="311" cy="742" r="10" /><circle cx="571" cy="525" r="6" /><circle cx="886" cy="969" r="6" />
        </g>
      </g>
      <g className="font-['Noto_Sans']" stroke="#f7f5f0" strokeWidth="2.500" paintOrder="stroke" strokeLinejoin="round">
        {places.map(([name, x, y, w, s]) => (
          <text key={name} x={x} y={y} textLength={w} lengthAdjust="spacingAndGlyphs" fontSize={s} fill="#444">
            {name}
          </text>
        ))}
        <text x="1657" y="1407" textLength="59" lengthAdjust="spacingAndGlyphs" fontSize="13" fontStyle="italic" fill="#8d6f97">California</text>
        <text x="1878" y="1312" textLength="46" lengthAdjust="spacingAndGlyphs" fontSize="13" fontStyle="italic" fill="#8d6f97">Nevada</text>
      </g>
      <g transform="translate(1400 1250) scale(.33333)">
        <circle cx="452" cy="366" r="23" fill="#f0932b" stroke="#2b2113" strokeWidth="9" />
        <path d="M445 350 458 348M440 372 462 380" stroke="#5a3a12" strokeWidth="6" />
        <g stroke="#e73f75" strokeWidth="18" strokeLinejoin="round">
          {faults.map((d) => (
            <path key={d} d={d} />
          ))}
        </g>
      </g>
    </svg>
  );
}

/* ---------- layer tree ---------- */

function LayerTree() {
  return (
    <div className="flex flex-1 flex-col border-2 border-[#b9b9b9] bg-white">
      <div className="flex h-12 items-center overflow-hidden bg-[#4592a9]">
        <div className="h-full w-10 shrink-0 bg-[#3864e0]" />
        <div className="ml-3.5"><Checkbox /></div>
        <div className="ml-[26px] h-1 w-7 shrink-0 bg-[#d4659a]" />
        <span className="ml-3.5 pt-0.5 text-[33px] font-bold whitespace-nowrap text-white underline decoration-[3px] underline-offset-[5px]">
          Earthquake Ruptures - RupFile
        </span>
      </div>
      <div className="flex h-12 items-center">
        <svg viewBox="0 0 20 20" className="ml-3.5 size-5" fill="none" stroke="#b4b4b4" strokeWidth="2.600">
          <path d="m5 3 8 7-8 7" />
        </svg>
        <div className="ml-5"><Checkbox /></div>
        <svg viewBox="0 0 30 30" className="ml-[26px] size-[30px]" fill="none">
          <path d="M1.500 16v12.500h13" stroke="#8b8b85" strokeWidth="1.800" />
          <path d="M10 3.500h18v15.500H10z" fill="#eee" stroke="#8b8b85" strokeWidth="1.800" />
          <path d="M6 8h17.500v15.500H6z" fill="#f1f1ee" stroke="#8b8b85" strokeWidth="1.800" />
          <path d="M14.500 14v4.500q0 2 2.200 2t2.200-2V3q0-2-2.200-2t-2.200 2v3" stroke="#41608a" strokeWidth="2" />
        </svg>
        <span className="ml-3.5 pt-0.5 text-[32px] text-[#262626]">Sites</span>
      </div>
      <div className="flex h-12 items-center">
        <svg viewBox="0 0 20 20" className="ml-3 size-5" fill="none" stroke="#b4b4b4" strokeWidth="2.600">
          <path d="m2 7 8 7 8-7" />
        </svg>
        <div className="ml-[22px]"><Checkbox /></div>
        <svg viewBox="0 0 27 27" className="ml-[30px] size-[26px]">
          <path d="M0 0h27v27H0z" fill="#fff" />
          <path d="M9 0h9v9H9zM0 9h9v9H0zM18 9h9v9h-9zM9 18h9v9H9z" fill="#adc4e2" />
          <path d="M0 0h9v9H0zM18 0h9v9h-9zM9 9h9v9H9zM0 18h9v9H0z" fill="#2b394d" />
        </svg>
        <span className="ml-3.5 pt-[3px] text-[33.400px] font-bold whitespace-nowrap text-[#222]">Open Street Map</span>
      </div>
      <div className="mt-auto flex h-[29px] items-center border-t-2 border-[#e8e8e8] bg-[#fafafa] pl-1.5">
        <div className="h-4 w-[371px] rounded-full bg-[#7d7d7d]" />
      </div>
    </div>
  );
}

/* ---------- page ---------- */

function TabDivider() {
  return <div className="my-[5px] w-1 rounded-l-full bg-[#3f86fb]" />;
}

export default function App() {
  return (
    <div className="relative h-[1916px] w-[2566px] overflow-hidden bg-white pt-[75px] pl-[112px] font-['Inter','Liberation_Sans',sans-serif] leading-none">
      <div className="flex h-[1693px] w-[2343px] flex-col overflow-hidden rounded-[20px] bg-[#efefef] shadow-[0_0_1px_1px_rgba(0,0,0,0.25),0_34px_72px_rgba(0,0,0,0.42)]">
        <div className="flex h-[58px] items-center border-b-2 border-[#cbcbcb] bg-[#f8f2ed] pt-0.5 pl-4">
          <TrafficLights middle="border-[#c9c4c0] bg-[#dedad7]" />
        </div>

        <div className="mt-[63px] ml-16 flex h-[1441px] w-[2214px] flex-col bg-[#ebebeb] px-6 pt-3 pb-6">
          <div className="ml-[248px] flex h-10 w-[1664px] rounded-[10px] bg-white text-[25.400px] text-[#222] shadow-[0_1px_1px_rgba(0,0,0,0.35)]">
            <div className="flex w-[102px] items-center justify-center pt-[3px] pr-0.5">Sites</div>
            <div className="mt-[3px] flex w-[290px] items-center justify-center rounded-l-[8px] bg-linear-to-b from-[#4892ff] to-[#3d79f5] pl-[3px] text-white">
              Earthquake Rupture
            </div>
            <div className="flex w-[270px] items-center justify-center pt-[3px] pl-[3px]">Scenario Selection</div>
            <TabDivider />
            <div className="flex w-[321px] items-center justify-center pt-[3px]">Ground Motion Models</div>
            <TabDivider />
            <div className="flex w-[318px] items-center justify-center pt-[3px]">Ground Failure Models</div>
            <TabDivider />
            <div className="flex flex-1 items-center justify-center pt-[3px] pl-1.5">Record Selection and Run</div>
          </div>

          <div className="mt-0.5 flex flex-1 flex-col border-2 border-[#f4f4f4]">
            <div className="flex h-[124px] pl-6">
              <div className="w-[534px] pt-[32px]">
                <div className="text-[28px] font-bold text-black">Earthquake Rupture</div>
                <div className="mt-[26px] h-1.5 bg-[#b0bec5]" />
              </div>
              <div className="pt-10"><Combo /></div>
            </div>
            <div className="flex h-[124px] pl-6">
              <div className="w-[534px] pt-[32px]">
                <div className="text-[28px] font-bold text-black">OpenSHA</div>
                <div className="mt-[26px] h-1.5 bg-[#b0bec5]" />
              </div>
              <div className="pt-10"><Combo text="- Single Branch" /></div>
            </div>
            <div className="flex flex-col pt-[34px] pl-6 text-[23.800px] text-black">
              <div className="flex h-[84px] items-center pb-0.5">Rupture Offset (km)</div>
              <div className="flex h-20 items-center pt-px">Floater Type</div>
              <div className="flex h-[78px] items-center pb-px">Background Seismicity</div>
              <div className="flex h-[78px] items-center pb-px">Treat Background Seismicity</div>
              <div className="flex h-[78px] items-center pb-px">Probability Model</div>
            </div>

            <div className="mt-[45px] flex flex-1">
              <div className="flex w-[511px] flex-col">
                <div className="flex h-[135px] flex-col gap-0.5 text-[23.800px] text-black">
                  {[
                    ["Maximum Distance (km)", "200"],
                    ["Maximum Magnitude", "10"],
                    ["Minimum Magnitude", "2.5"],
                  ].map(([label, value]) => (
                    <div key={label} className="flex h-10">
                      <div className="flex w-[276px] items-center pt-0.5 whitespace-nowrap">{label}</div>
                      <div className="flex flex-1 items-center border border-b-2 border-[#d4d4d4] border-b-[#b4b4b4] bg-white pt-1 pl-px text-[25.500px]">{value}</div>
                    </div>
                  ))}
                </div>
                <div className="h-[46px] shrink-0 rounded-t-[3px] border-2 border-r-0 border-[#8ab5c8] border-b-[#5f7f8f] bg-[#64b3f6]" />
                <LayerTree />
              </div>
              <div className="flex w-[31px] items-center justify-center pt-[188px] pl-1">
                <svg viewBox="0 0 16 24" className="h-6 w-4" fill="none" stroke="#222" strokeWidth="4">
                  <path d="m2 2 10.500 10L2 22" />
                </svg>
              </div>
              <div className="mt-[135px] flex-1 overflow-hidden border-2 border-[#b0b0b0]">
                <MapCanvas />
              </div>
            </div>
          </div>
        </div>

        <div className="mx-10 mt-[45px] flex h-[46px] items-center justify-center rounded-[3px] border-2 border-[#8ab5c8] border-b-[#5f7f8f] bg-[#64b3f6] pt-0.5 pr-0.5 text-[23.700px] font-bold text-white">
          Close
        </div>
      </div>

      <ContextMenu />
      <div className="absolute top-[520px] left-[957px] h-[748px] w-[1476px] rounded-[20px] shadow-[0_0_1px_1px_rgba(0,0,0,0.25),0_34px_72px_rgba(0,0,0,0.45)]" />
      <AttributeTable />
    </div>
  );
}
